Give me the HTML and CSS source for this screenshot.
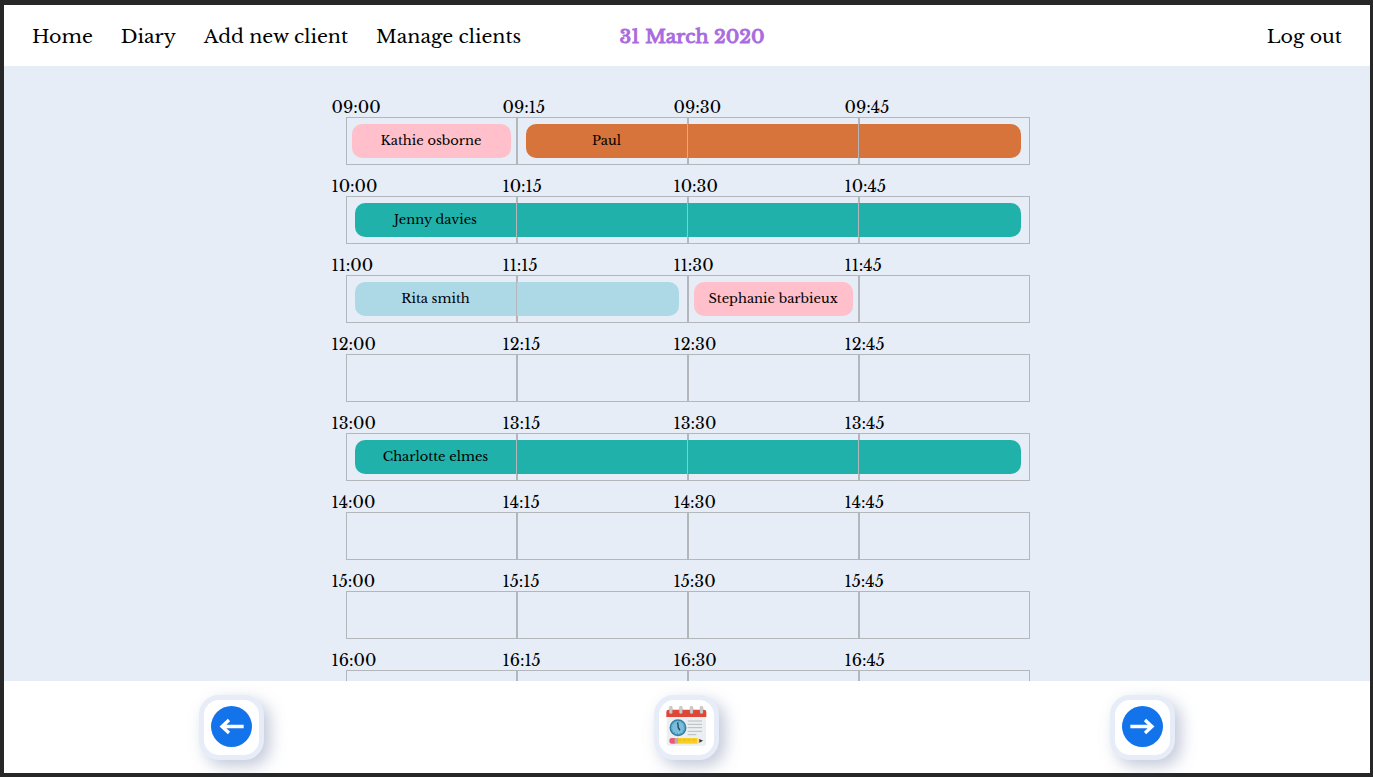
FILE: index.html
```html
<!DOCTYPE html>
<html lang="en">
<head>
<meta charset="utf-8">
<meta name="viewport" content="width=device-width, initial-scale=1">
<title>Diary</title>
<link rel="stylesheet" href="styles.css">
</head>
<body>
<header class="topbar">
  <nav class="menu">
    <a href="#">Home</a>
    <a href="#">Diary</a>
    <a href="#">Add new client</a>
    <a href="#">Manage clients</a>
  </nav>
  <h1 class="date">31 March 2020</h1>
  <a class="logout" href="#">Log out</a>
</header>

<main class="diary">
  <section class="hour">
    <time>09:00</time><time>09:15</time><time>09:30</time><time>09:45</time>
    <div class="cell"></div><div class="cell"></div><div class="cell"></div><div class="cell"></div>
    <div class="booking single pink" style="--start:1;--span:1"><span>Kathie osborne</span></div>
    <div class="booking orange" style="--start:2;--span:3"><span>Paul</span></div>
  </section>
  <section class="hour">
    <time>10:00</time><time>10:15</time><time>10:30</time><time>10:45</time>
    <div class="cell"></div><div class="cell"></div><div class="cell"></div><div class="cell"></div>
    <div class="booking green" style="--start:1;--span:4"><span>Jenny davies</span></div>
  </section>
  <section class="hour">
    <time>11:00</time><time>11:15</time><time>11:30</time><time>11:45</time>
    <div class="cell"></div><div class="cell"></div><div class="cell"></div><div class="cell"></div>
    <div class="booking blue" style="--start:1;--span:2"><span>Rita smith</span></div>
    <div class="booking single pink" style="--start:3;--span:1"><span>Stephanie barbieux</span></div>
  </section>
  <section class="hour">
    <time>12:00</time><time>12:15</time><time>12:30</time><time>12:45</time>
    <div class="cell"></div><div class="cell"></div><div class="cell"></div><div class="cell"></div>
  </section>
  <section class="hour">
    <time>13:00</time><time>13:15</time><time>13:30</time><time>13:45</time>
    <div class="cell"></div><div class="cell"></div><div class="cell"></div><div class="cell"></div>
    <div class="booking green" style="--start:1;--span:4"><span>Charlotte elmes</span></div>
  </section>
  <section class="hour">
    <time>14:00</time><time>14:15</time><time>14:30</time><time>14:45</time>
    <div class="cell"></div><div class="cell"></div><div class="cell"></div><div class="cell"></div>
  </section>
  <section class="hour">
    <time>15:00</time><time>15:15</time><time>15:30</time><time>15:45</time>
    <div class="cell"></div><div class="cell"></div><div class="cell"></div><div class="cell"></div>
  </section>
  <section class="hour">
    <time>16:00</time><time>16:15</time><time>16:30</time><time>16:45</time>
    <div class="cell"></div><div class="cell"></div><div class="cell"></div><div class="cell"></div>
  </section>
</main>

<footer class="controls">
  <button class="tile" type="button" aria-label="Previous day">
    <svg viewBox="0 0 123 123" aria-hidden="true">
      <circle cx="61.500" cy="61.500" r="61.500" fill="#1373eb"/>
      <path d="M98 61.500H33M54 42L33 61.500L54 81" fill="none" stroke="#fff" stroke-width="10"/>
    </svg>
  </button>
  <button class="tile" type="button" aria-label="Choose a date">
    <svg viewBox="80 78 123 123" aria-hidden="true">
      <path d="M82 108H200V192Q200 197 195 197H87Q82 197 82 192Z" fill="#eceff1"/>
      <path d="M81 111V96Q81 89 88 89H194Q201 89 201 96V111Z" fill="#de4638"/>
      <g fill="#cfc9c9" stroke="#aaa3a5" stroke-width="1">
        <rect x="90" y="79" width="9" height="22" rx="4"/>
        <rect x="120" y="79" width="9" height="22" rx="4"/>
        <rect x="152" y="79" width="9" height="22" rx="4"/>
        <rect x="182" y="79" width="9" height="22" rx="4"/>
      </g>
      <circle cx="116" cy="143" r="23" fill="#79bedc" stroke="#347fa6" stroke-width="5"/>
      <circle cx="116" cy="143" r="18" fill="none" stroke="#3e7590" stroke-width="3" stroke-dasharray="2 7.425"/>
      <path d="M115 127L117 143L122 151" fill="none" stroke="#204659" stroke-width="4"/>
      <path d="M145 123H188M145 133H188M145 143H188M145 154H188M145 164H171" stroke="#b8bcc0" stroke-width="3"/>
      <path d="M97 174H107V191H97Q90 191 90 182.500Q90 174 97 174Z" fill="#ef5877"/>
      <path d="M106 174H116V191H106Z" fill="#b8aeb0"/>
      <path d="M116 174H174V191H116Z" fill="#f8cf22"/>
      <path d="M116 180H174" stroke="#e5b51c" stroke-width="3" stroke-dasharray="10 4"/>
      <path d="M174 174L191 182.500L174 191Z" fill="#f1d5a6"/>
      <path d="M180 177L191 182.500L180 188Z" fill="#383b40"/>
    </svg>
  </button>
  <button class="tile" type="button" aria-label="Next day">
    <svg viewBox="0 0 123 123" aria-hidden="true">
      <circle cx="61.500" cy="61.500" r="61.500" fill="#1373eb"/>
      <path d="M25 61.500H90M69 42L90 61.500L69 81" fill="none" stroke="#fff" stroke-width="10"/>
    </svg>
  </button>
</footer>
</body>
</html>
```

FILE: styles.css
```css
* {
  box-sizing: border-box;
}

body {
  display: flex;
  flex-direction: column;
  height: 100vh;
  margin: 0;
  padding: 5px 3px 4px 4px;
  background: #272727;
  color: #000;
  font-family: "Libre Baskerville", "Liberation Serif", serif;
}

a {
  color: inherit;
  text-decoration: none;
}

.topbar {
  display: grid;
  grid-template-columns: 1fr auto 1fr;
  align-items: center;
  padding: 18px 28px 15px;
  background: #fff;
  font-size: 19px;
  line-height: 28px;
}

.menu {
  display: flex;
  gap: 28px;
  white-space: nowrap;
}

.date {
  margin: 0;
  padding-left: 10px;
  color: #a96cdf;
  font-size: 19px;
  font-weight: 400;
  line-height: 28px;
  white-space: nowrap;
  -webkit-text-stroke: 1px #a96cdf;
}

.logout {
  justify-self: end;
}

.diary {
  flex: 1;
  min-height: 0;
  overflow-y: auto;
  scrollbar-width: none;
  padding: 20px calc(25% - 1px) 0 25%;
  background: #e6edf7;
}

.hour {
  display: grid;
  grid-template-columns: repeat(4, 1fr);
  grid-template-rows: auto 48px;
}

.hour time {
  grid-row: 1;
  margin-left: -14px;
  padding-top: 11px;
  font-size: 16px;
  line-height: 20px;
}

.cell {
  position: relative;
  grid-row: 2;
  border: 1px solid #b3b6bb;
}

.cell:nth-of-type(1) { grid-column: 1; }
.cell:nth-of-type(2) { grid-column: 2; }
.cell:nth-of-type(3) { grid-column: 3; }
.cell:nth-of-type(4) { grid-column: 4; }

/* quarter-hour divider stays visible over long bookings */
.cell::after {
  content: "";
  position: absolute;
  z-index: 2;
  top: 0;
  bottom: 0;
  right: -1px;
  border-right: 1px solid #b3b6bb;
}

.booking {
  --inset: 9px;
  z-index: 1;
  grid-row: 2;
  grid-column: var(--start) / span var(--span);
  margin: 7px var(--inset);
  border-radius: 10px;
  font-size: 13px;
  line-height: 34px;
}

.booking span {
  display: block;
  width: calc((100% + 2 * var(--inset)) / var(--span) - var(--inset));
  text-align: center;
  white-space: nowrap;
}

.booking.single {
  --inset: 6px;
}

.booking.single span {
  width: 100%;
}

.pink { background: #ffc0cb; }
.orange { background: #d6743b; }
.green { background: #20b2aa; }
.blue { background: #add8e6; }

.controls {
  display: flex;
  justify-content: space-around;
  padding: 14px 0 13px;
  background: #fff;
}

.tile {
  display: grid;
  place-items: center;
  width: 65px;
  height: 65px;
  padding: 0 0 2px;
  border: 5px solid #e6edf8;
  border-radius: 20px;
  background: #fff;
  box-shadow: 6px 6px 16px rgba(90, 105, 150, 0.36), -6px -6px 16px rgba(255, 255, 255, 0.5);
  cursor: pointer;
}

.tile svg {
  display: block;
  width: 41px;
  height: 41px;
}
```
